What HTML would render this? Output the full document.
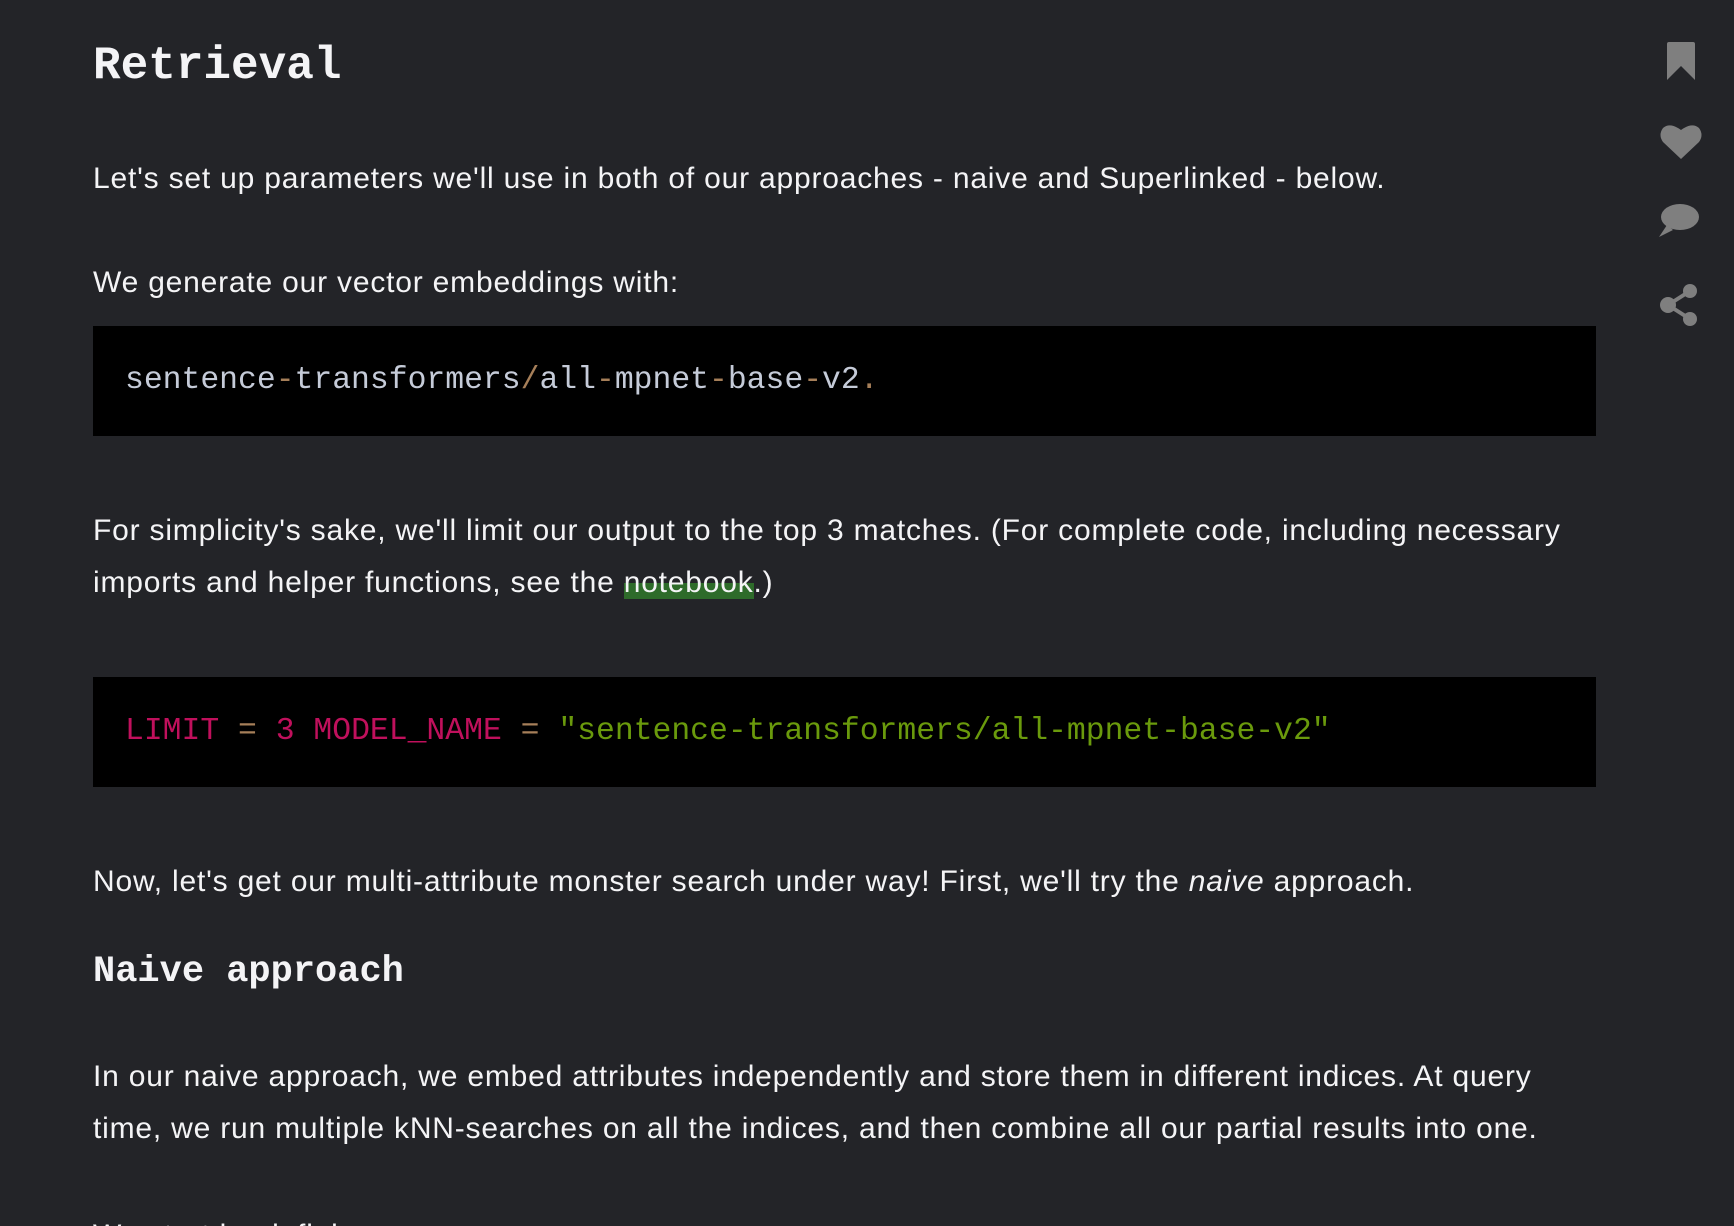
<!DOCTYPE html>
<html><head><meta charset="utf-8"><style>
html,body{margin:0;padding:0;background:#232428;width:1734px;height:1226px;overflow:hidden}
body{position:relative;font-family:"Liberation Sans",sans-serif;color:#f4f4f6}
.p{position:absolute;left:93px;font-size:30px;line-height:52px;white-space:nowrap;letter-spacing:0.8px}
.h{position:absolute;left:93px;font-family:"Liberation Mono",monospace;font-weight:bold;color:#f4f4f6;white-space:nowrap}
.code{position:absolute;left:93px;width:1503px;height:110px;background:#000;font-family:"Liberation Mono",monospace;font-size:31.4px;line-height:110px;white-space:nowrap;color:#c5cbd8}
.code span.t{position:absolute;left:32px;top:0}
.o{color:#a67f59}.k{color:#c0105c}.g{color:#6a9a0c}
a{color:#f4f4f6;text-decoration:none;background:linear-gradient(#2e6b2a,#2e6b2a) no-repeat 0 100%/100% 16px}
.ic{position:absolute;fill:#7f7f7f}
</style></head><body>
<div class="h" style="top:38px;font-size:46px;line-height:56px">Retrieval</div>
<div class="p" style="top:153px">Let's set up parameters we'll use in both of our approaches - naive and Superlinked - below.</div>
<div class="p" style="top:257px">We generate our vector embeddings with:</div>
<div class="code" style="top:326px"><span class="t">sentence<span class="o">-</span>transformers<span class="o">/</span>all<span class="o">-</span>mpnet<span class="o">-</span>base<span class="o">-</span>v2<span class="o">.</span></span></div>
<div class="p" style="top:505px">For simplicity's sake, we'll limit our output to the top 3 matches. (For complete code, including necessary<br>imports and helper functions, see the <a>notebook</a>.)</div>
<div class="code" style="top:677px"><span class="t"><span class="k">LIMIT</span> <span class="o">=</span> <span class="k">3</span> <span class="k">MODEL_NAME</span> <span class="o">=</span> <span class="g">"sentence-transformers/all-mpnet-base-v2"</span></span></div>
<div class="p" style="top:856px">Now, let's get our multi-attribute monster search under way! First, we'll try the <i>naive</i> approach.</div>
<div class="h" style="top:950px;font-size:37px;line-height:44px">Naive approach</div>
<div class="p" style="top:1051px">In our naive approach, we embed attributes independently and store them in different indices. At query<br>time, we run multiple kNN-searches on all the indices, and then combine all our partial results into one.</div>
<div class="p" style="top:1210px">We start by defining our</div>
<svg class="ic" style="left:1667px;top:42px" width="28" height="38" viewBox="0 0 28 38"><path d="M2 0H26Q28 0 28 2V38L14 24L0 38V2Q0 0 2 0Z"/></svg>
<svg class="ic" style="left:1660px;top:124px" width="42" height="35" viewBox="0 0 42 35"><path d="M21 35L3 18Q-2 11 3 4Q10-2 21 6Q32-2 39 4Q44 11 39 18Z"/></svg>
<svg class="ic" style="left:1659px;top:203px" width="40" height="34" viewBox="0 0 40 34"><ellipse cx="21" cy="14" rx="19" ry="13"/><path d="M8 22L0 34L14 27Z"/></svg>
<svg class="ic" style="left:1659px;top:283px" width="40" height="44" viewBox="0 0 40 44"><circle cx="31" cy="8" r="7"/><circle cx="9" cy="22" r="8"/><circle cx="31" cy="36" r="7"/><path d="M9 22L31 8M9 22L31 36" stroke="#7f7f7f" stroke-width="4"/></svg>
</body></html>
